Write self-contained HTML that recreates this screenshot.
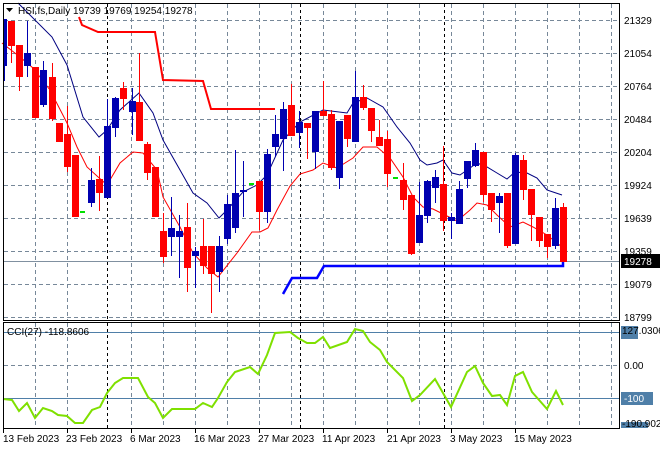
<!DOCTYPE html>
<html><head><meta charset="utf-8"><style>
html,body{margin:0;padding:0;background:#fff;width:660px;height:450px;overflow:hidden}
svg{display:block}
text{font-family:"Liberation Sans",sans-serif;font-size:10px;fill:#000}
</style></head><body>
<svg width="660" height="450" viewBox="0 0 660 450" xmlns="http://www.w3.org/2000/svg">
<rect width="660" height="450" fill="#fff"/>
<g stroke="#778899" stroke-width="1" stroke-dasharray="4,3" fill="none">
<path d="M4 20.5H620M4 53.5H620M4 86.5H620M4 119.5H620M4 152.5H620M4 185.5H620M4 218.5H620M4 251.5H620M4 284.5H620M4 317.5H620"/>
<path d="M35.5 4V320M67.5 4V320M131.5 4V320M163.5 4V320M195.5 4V320M227.5 4V320M259.5 4V320M291.5 4V320M323.5 4V320M355.5 4V320M387.5 4V320M419.5 4V320M451.5 4V320M483.5 4V320M515.5 4V320M547.5 4V320M579.5 4V320M611.5 4V320"/>
<path d="M35.5 323V428M67.5 323V428M131.5 323V428M163.5 323V428M195.5 323V428M227.5 323V428M259.5 323V428M291.5 323V428M323.5 323V428M355.5 323V428M387.5 323V428M419.5 323V428M451.5 323V428M483.5 323V428M515.5 323V428M547.5 323V428M579.5 323V428M611.5 323V428"/>
<path d="M4 365.5H620"/>
</g>
<g stroke="#000" stroke-width="1" stroke-dasharray="3,3">
<path d="M107.5 4V320M300.5 4V320M444.5 4V320M107.5 323V428M300.5 323V428M444.5 323V428"/>
</g>
<path d="M4 332.5H620M4 398.5H620" stroke="#4f7fa8" stroke-width="1"/>
<path d="M4 261.5H620" stroke="#8090a0" stroke-width="1"/>
<polyline points="79,17 82,25 98,32 155,32 163,80 203,81 211,109 275,109" fill="none" stroke="#ff0000" stroke-width="2"/>
<polyline points="283,294 292,278 317,278 324,266 563,266 563,262" fill="none" stroke="#0000ff" stroke-width="2.5"/>
<polyline fill="none" stroke="#000080" stroke-width="1" points="18,3 52,37 67,65 83,117 99,137 107,130 120,110 139,93 153,113 163,140 180,170 193,193 207,203 219,218 227,210 243,192 257,185 267,175 283,140 300,122 323,110 347,113 353,103 367,98 383,107 397,127 410,143 420,160 427,165 437,163 443,160 452,173 460,175 470,168 477,163 487,167 497,173 507,179 515,172 527,173 537,178 547,190 553,192 562,195"/>
<polyline fill="none" stroke="#ff0000" stroke-width="1" points="2,43 20,57 33,68 50,90 67,123 77,147 87,167 107,185 120,163 133,152 143,153 157,170 163,197 180,227 193,253 207,268 218,277 237,253 252,232 260,232 268,228 277,210 290,186 300,174 313,170 323,163 337,168 353,158 363,147 377,147 390,158 403,177 413,197 423,207 433,209 443,214 457,221 470,210 477,203 487,205 497,215 510,227 523,222 533,227 547,235 562,247"/>
<g stroke-width="1">
<path stroke="#0000b0" d="M4.5 19V81M27.5 21V77M43.5 61V107M91.5 168V207M107.5 99V198M115.5 97V137M132.5 88V135M171.5 197V256M179.5 215V278M195.5 247V288M219.5 236V292M227.5 195V244M235.5 150V233M243.5 161V217M267.5 149V223M275.5 115V157M283.5 102V171M299.5 111V148M315.5 111V169M339.5 121V189M355.5 71V142M419.5 182V243M427.5 180V223M435.5 170V203M451.5 213V239M459.5 181V224M467.5 161V188M475.5 143V167M499.5 193V233M515.5 153V244M555.5 198V249"/>
<path stroke="#ff0000" d="M11.5 21V63M19.5 45V91M35.5 67V118M52.5 63V121M59.5 123V142M67.5 106V172M75.5 155V217M99.5 156V211M123.5 82V110M139.5 53V141M147.5 142V180M155.5 167V217M163.5 213V263M187.5 203V292M203.5 219V274M211.5 246V313M259.5 181V230M291.5 84V136M307.5 123V159M323.5 81V116M331.5 110V170M347.5 115V147M363.5 85V110M371.5 108V142M379.5 120V146M387.5 131V187M403.5 163V210M411.5 195V255M443.5 146V231M483.5 152V202M491.5 193V222M507.5 193V248M523.5 155V200M531.5 189V241M539.5 217V247M547.5 234V258M563.5 203V262"/>
</g>
<g fill="#0000b0">
<rect x="3" y="19" width="4" height="47"/><rect x="24" y="53" width="7" height="13"/><rect x="40" y="70" width="7" height="35"/><rect x="88" y="180" width="7" height="23"/><rect x="104" y="126" width="7" height="72"/><rect x="112" y="98" width="7" height="30"/><rect x="129" y="101" width="7" height="11"/><rect x="168" y="228" width="7" height="9"/><rect x="176" y="231" width="7" height="6"/><rect x="192" y="251" width="7" height="5"/><rect x="216" y="246" width="7" height="26"/><rect x="224" y="204" width="7" height="35"/><rect x="232" y="193" width="7" height="35"/><rect x="240" y="190" width="7" height="2"/><rect x="264" y="154" width="7" height="58"/><rect x="272" y="134" width="7" height="13"/><rect x="280" y="109" width="7" height="30"/><rect x="296" y="122" width="7" height="11"/><rect x="312" y="111" width="7" height="41"/><rect x="336" y="121" width="7" height="57"/><rect x="352" y="97" width="7" height="45"/><rect x="416" y="215" width="7" height="28"/><rect x="424" y="181" width="7" height="35"/><rect x="432" y="177" width="7" height="11"/><rect x="448" y="217" width="7" height="4"/><rect x="456" y="189" width="7" height="35"/><rect x="464" y="161" width="7" height="18"/><rect x="472" y="150" width="7" height="16"/><rect x="496" y="196" width="7" height="7"/><rect x="512" y="155" width="7" height="89"/><rect x="552" y="208" width="7" height="38"/>
</g>
<g fill="#ff0000">
<rect x="8" y="21" width="7" height="25"/><rect x="16" y="45" width="7" height="32"/><rect x="32" y="67" width="7" height="51"/><rect x="49" y="77" width="7" height="42"/><rect x="56" y="123" width="7" height="19"/><rect x="64" y="134" width="7" height="33"/><rect x="72" y="155" width="7" height="62"/><rect x="96" y="179" width="7" height="14"/><rect x="120" y="88" width="7" height="11"/><rect x="136" y="102" width="7" height="39"/><rect x="144" y="144" width="7" height="29"/><rect x="152" y="167" width="7" height="50"/><rect x="160" y="231" width="7" height="26"/><rect x="184" y="227" width="7" height="41"/><rect x="200" y="246" width="7" height="20"/><rect x="208" y="246" width="7" height="28"/><rect x="256" y="181" width="7" height="31"/><rect x="288" y="105" width="7" height="31"/><rect x="304" y="123" width="7" height="5"/><rect x="320" y="111" width="7" height="5"/><rect x="328" y="114" width="7" height="54"/><rect x="344" y="115" width="7" height="24"/><rect x="360" y="97" width="7" height="11"/><rect x="368" y="108" width="7" height="23"/><rect x="376" y="137" width="7" height="9"/><rect x="384" y="139" width="7" height="35"/><rect x="400" y="180" width="7" height="20"/><rect x="408" y="195" width="7" height="59"/><rect x="440" y="184" width="7" height="37"/><rect x="480" y="152" width="7" height="43"/><rect x="488" y="193" width="7" height="17"/><rect x="504" y="193" width="7" height="53"/><rect x="520" y="160" width="7" height="30"/><rect x="528" y="189" width="7" height="26"/><rect x="536" y="217" width="7" height="24"/><rect x="544" y="234" width="7" height="13"/><rect x="560" y="207" width="7" height="55"/>
</g>
<g fill="#00e000"><rect x="80" y="211" width="5" height="2"/><rect x="249" y="183" width="5" height="2"/><rect x="393" y="177" width="5" height="2"/></g>
<polyline fill="none" stroke="#7fe000" stroke-width="2" points="3,399 12,400 19,411 27,403 35,418 43,408 52,411 58,415 67,416 75,423 83,423 92,410 100,407 107,393 115,383 123,378 138,378 148,397 155,403 163,418 172,409 195,409 203,403 212,407 218,398 227,382 235,372 250,367 258,374 267,355 275,333 290,332 298,338 307,343 315,343 323,337 330,348 347,342 355,329 363,331 370,342 380,350 387,362 403,378 412,401 420,395 435,379 443,393 451,407 467,372 475,366 483,383 492,396 500,395 507,405 515,376 523,372 532,392 547,409 556,391 563,405"/>
<rect x="3.5" y="3.5" width="616" height="317" fill="none" stroke="#000"/>
<rect x="3.5" y="322.5" width="616" height="106" fill="none" stroke="#000"/>
<path d="M6 8h7l-3.5 4z" fill="#000"/>
<text x="18" y="14">HSI.fs,Daily  19739 19769 19254 19278</text>
<text x="7" y="335">CCI(27) -118.8606</text>
<g>
<text x="624" y="24">21329</text><text x="624" y="57">21054</text><text x="624" y="90">20764</text><text x="624" y="123">20484</text><text x="624" y="156">20204</text><text x="624" y="189">19924</text><text x="624" y="222">19639</text><text x="624" y="255">19359</text><text x="624" y="288">19079</text><text x="624" y="321">18799</text>
</g>
<rect x="621" y="254" width="39" height="14" fill="#000"/>
<text x="624" y="265" style="fill:#fff">19278</text>
<rect x="621" y="326" width="17" height="13" fill="#4f7fa8"/>
<text x="622" y="334">127.0306</text>
<rect x="621" y="392" width="32" height="13" fill="#4f7fa8"/>
<text x="624" y="402" style="fill:#fff">-100</text>
<text x="624" y="369">0.00</text>
<rect x="621" y="422" width="27" height="6" fill="#4f7fa8"/>
<text x="622" y="427">-190.902</text>
<path d="M3.5 428V433M67.5 428V433M131.5 428V433M195.5 428V433M259.5 428V433M323.5 428V433M387.5 428V433M451.5 428V433M515.5 428V433" stroke="#000"/>
<g>
<text x="3" y="442">13 Feb 2023</text><text x="66" y="442">23 Feb 2023</text><text x="130" y="442">6 Mar 2023</text><text x="194" y="442">16 Mar 2023</text><text x="258" y="442">27 Mar 2023</text><text x="322" y="442">11 Apr 2023</text><text x="387" y="442">21 Apr 2023</text><text x="450" y="442">3 May 2023</text><text x="514" y="442">15 May 2023</text>
</g>
</svg>
</body></html>
